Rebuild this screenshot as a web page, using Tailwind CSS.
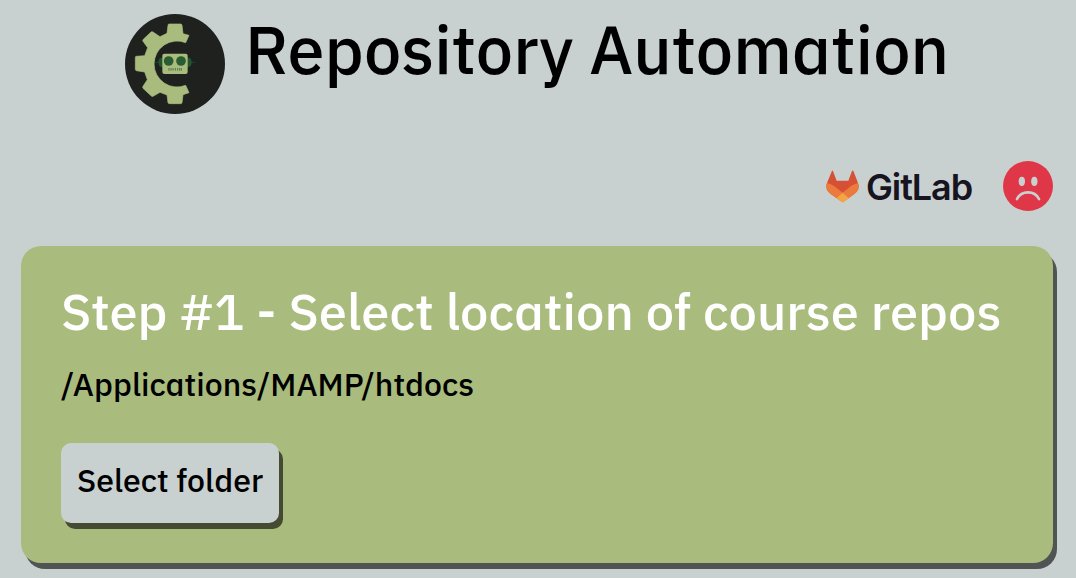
<!DOCTYPE html>
<html lang="en">
<head>
<meta charset="utf-8">
<title>Repository Automation</title>
<script src="https://cdn.jsdelivr.net/npm/@tailwindcss/browser@4"></script>
</head>
<body class="h-[578px] overflow-hidden bg-[#c9d1d0] font-['IBM_Plex_Sans','Noto_Sans',sans-serif] font-medium text-black [font-feature-settings:'ss01']">
<header class="flex h-[114px] items-start pl-[125px] pt-[14px]">
  <svg class="size-[100px] shrink-0" viewBox="0 0 300 300">
    <circle cx="150" cy="150" r="150" fill="#1e211e"/>
    <path fill="#a9bc7d" stroke="#a9bc7d" stroke-width="2" stroke-linejoin="round" d="M130 31Q131 30 134 30H167Q170 30 171 34L174 59L192 64L182 86A69 69 0 1 0 182 214L192 236L174 242L171 266Q170 269 167 269H134Q130 269 129 266L126 243L105 235L84 247Q81 248 79 246L54 223Q52 220 54 217L67 197L59 174L34 170Q31 169 31 166V131Q31 127 34 127L59 125L68 101L54 82Q52 79 55 76L78 54Q81 52 84 54L105 68L126 58L129 34Z"/>
    <path d="M89 145h18M193 145h17" stroke="#1e4a2b" stroke-width="3"/>
    <ellipse cx="110" cy="145" rx="10" ry="14" fill="#24542f"/><ellipse cx="190" cy="145" rx="10" ry="14" fill="#24542f"/>
    <rect x="112" y="119" width="76" height="61" rx="6" fill="#a9bc7d"/>
    <circle cx="131" cy="141" r="14.500" fill="#2a5c34"/><circle cx="168" cy="141" r="14.500" fill="#2a5c34"/>
    <path d="M132 162v8M138 162v8M144 162v8M151 162v8M158 162v8M164 162v8M169 162v8" stroke="#4c7646" stroke-width="3"/>
  </svg>
  <h1 class="ml-[20px] mt-[-16px] whitespace-nowrap text-[66.56px] leading-[102px]">Repository Automation</h1>
</header>
<div class="flex h-[132px] items-start justify-end pr-[23px] pt-[47px]">
  <div class="mt-[6px] flex w-[147px] items-start">
    <svg class="mt-[3px] h-[33px] w-[33px] shrink-0" viewBox="0 0 99 97">
      <path fill="#d65035" d="M18 1q2-2 3 1l11 29h35L78 2q1-3 4-1l14 37q7 20-11 33L50 96 14 71Q-4 58 3 38Z"/>
      <path fill="#ed7a3d" d="M3 38q12 3 22 10l25 19 24-19q11-8 22-10 7 20-11 33L50 96 14 71Q-4 58 3 38Z"/>
      <path fill="#e2632f" d="M33 54L50 67 66 54 50 67 68 84 50 67 32 84 50 67Z"/>
      <path fill="#f1a544" d="M50 67l18 17-15 11q-3 2-6 0L32 84Z"/>
    </svg>
    <span class="ml-[7px] whitespace-nowrap font-[Inter] text-[36px] font-semibold leading-[40px] tracking-[-1.1px] text-[#171321] [font-feature-settings:normal]">GitLab</span>
  </div>
  <svg class="ml-[30px] size-[50px] shrink-0" viewBox="0 0 150 150">
    <circle cx="75" cy="75" r="75" fill="#df3747"/>
    <ellipse cx="56.500" cy="61" rx="9.500" ry="14" fill="#c9d1d0"/><ellipse cx="94" cy="61" rx="9.500" ry="14" fill="#c9d1d0"/>
    <path d="M42 114Q52 94 75 94T108 114" fill="none" stroke="#c9d1d0" stroke-width="8" stroke-linecap="round"/>
  </svg>
</div>
<main class="ml-[21px] h-[317px] w-[1032px] rounded-[20px] bg-[#a9bc7d] pl-[40px] pt-[35px] shadow-[4px_6px_0_#505453]">
  <h2 class="h-[72px] whitespace-nowrap text-[50.65px] leading-[60px] text-white">Step #1 - Select location of course repos</h2>
  <p class="h-[90px] whitespace-nowrap text-[32px] leading-[62px]">/Applications/MAMP/htdocs</p>
  <button class="flex h-[80px] w-[218px] items-center whitespace-nowrap rounded-[10px] bg-[#c9d1d0] px-4 pb-[6px] text-[32px] shadow-[4px_6px_0_#444b32] [font-feature-settings:'ss01']">Select folder</button>
</main>
</body>
</html>
